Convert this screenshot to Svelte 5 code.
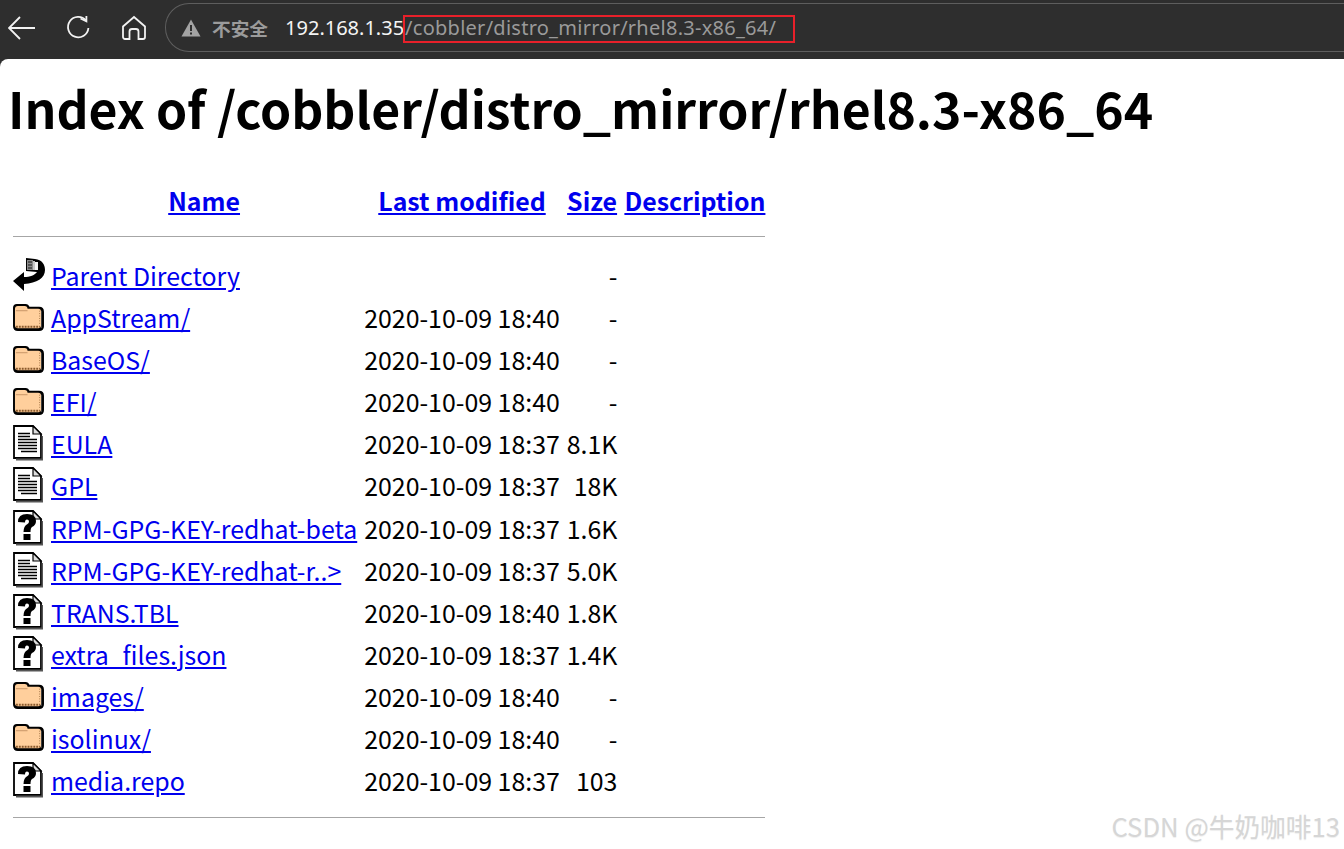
<script>
  const rows = [
    { icon: "back", name: "Parent Directory", date: "", size: "-" },
    { icon: "folder", name: "AppStream/", date: "2020-10-09 18:40", size: "-" },
    { icon: "folder", name: "BaseOS/", date: "2020-10-09 18:40", size: "-" },
    { icon: "folder", name: "EFI/", date: "2020-10-09 18:40", size: "-" },
    { icon: "text", name: "EULA", date: "2020-10-09 18:37", size: "8.1K" },
    { icon: "text", name: "GPL", date: "2020-10-09 18:37", size: "18K" },
    { icon: "unknown", name: "RPM-GPG-KEY-redhat-beta", date: "2020-10-09 18:37", size: "1.6K" },
    { icon: "text", name: "RPM-GPG-KEY-redhat-r..>", date: "2020-10-09 18:37", size: "5.0K" },
    { icon: "unknown", name: "TRANS.TBL", date: "2020-10-09 18:40", size: "1.8K" },
    { icon: "unknown", name: "extra_files.json", date: "2020-10-09 18:37", size: "1.4K" },
    { icon: "folder", name: "images/", date: "2020-10-09 18:40", size: "-" },
    { icon: "folder", name: "isolinux/", date: "2020-10-09 18:40", size: "-" },
    { icon: "unknown", name: "media.repo", date: "2020-10-09 18:37", size: "103" },
  ];
</script>

<div class="toolbar">
  <svg class="tool back" width="28" height="28" viewBox="0 0 28 28">
    <path d="M1 14H27M12 3L1 14L12 25" />
  </svg>
  <svg class="tool reload" width="26" height="26" viewBox="0 0 26 26">
    <path d="M21 5.500A10.200 10.200 0 1 0 23.400 13" />
    <path d="M15.500 3.500L21.400 6.400L21.400 1" />
  </svg>
  <svg class="tool home" width="26" height="26" viewBox="0 0 26 26">
    <path d="M2 11.500L13 2L24 11.500V22A2 2 0 0 1 22 24H17.500V16.500A2.500 2.500 0 0 0 15 14H11A2.500 2.500 0 0 0 8.500 16.500V24H4A2 2 0 0 1 2 22Z" />
  </svg>
  <div class="omnibox">
    <svg class="warn" width="20" height="18" viewBox="0 0 20 18">
      <path d="M10 0.500L19.500 17.500H0.500Z" fill="#a3a3a3" />
      <path d="M9 6H11V12H9ZM9 13.500H11V15.500H9Z" fill="#2e2e2e" />
    </svg>
    <span class="unsafe">不安全</span>
    <span class="host">192.168.1.35</span><span class="path">/cobbler/distro_mirror/rhel8.3-x86_64/</span>
    <span class="redbox"></span>
  </div>
</div>

<main class="page">
  <h1>Index of /cobbler/distro_mirror/rhel8.3-x86_64</h1>
  <table>
    <thead>
      <tr>
        <th class="ico"></th>
        <th><a href="#name">Name</a></th>
        <th><a href="#modified">Last modified</a></th>
        <th><a href="#size">Size</a></th>
        <th><a href="#description">Description</a></th>
      </tr>
      <tr><th colspan="5" class="rule"><hr /></th></tr>
    </thead>
    <tbody>
      {#each rows as row}
        <tr>
          <td class="ico">
            {#if row.icon === "back"}
              <svg width="32" height="34" viewBox="0 0 32 34">
                <path d="M13 0L22 1C29 2 32 6 32 12C32 20 24 25 11 26V33L0 23L11 14V19C17 19 22 17 24 14L13 13Z" fill="#000" />
                <path d="M14 2H20V12H14Z" fill="#8a8a8a" />
                <path d="M20 3H22V12H20Z" fill="#c4c4c4" />
                <path d="M22 4H25V12H22Z" fill="#f2f2f2" />
                <path d="M16 3V11M18 3V11" stroke="#1a1a1a" stroke-width="1" stroke-dasharray="2 1" />
              </svg>
            {:else if row.icon === "folder"}
              <svg width="31" height="29" viewBox="0 0 32 30">
                <path d="M0 5Q0 1 4 1H13Q16 1 17 4H27Q32 4 32 9V24Q32 29 27 29H5Q0 29 0 24Z" fill="#000" />
                <path d="M2 6Q2 3 5 3H12Q15 3 15 6H26Q29 6 29 9V23Q29 26 26 26H5Q2 26 2 23Z" fill="#ffcf9c" />
                <path d="M3 8H15" stroke="#c69463" stroke-width="1" />
                <path d="M3 24.500H28" stroke="#8a5a2c" stroke-width="2" stroke-dasharray="2 1" />
                <path d="M27.500 8V23" stroke="#a87a4c" stroke-width="1" stroke-dasharray="1 1.500" />
                <path d="M29.500 8V26" stroke="#444" stroke-width="1" />
              </svg>
            {:else}
              <svg width="30" height="36" viewBox="0 0 30 36">
                <path d="M1 1H20L28 9V33H1Z" fill="#fff" stroke="#000" stroke-width="1.800" />
                <path d="M3 34.500H29.500V11" fill="none" stroke="#555" stroke-width="1.800" />
                <path d="M20 1V9H28Z" fill="#ddd" stroke="#000" stroke-width="1.200" />
                {#if row.icon === "text"}
                  <path d="M5 8.500H17M5 11.500H17M5 14.500H24M5 17.500H24M5 20.500H24M5 23.500H24M8 26.500H24" stroke="#000" stroke-width="1.700" />
                {:else}
                  <path d="M5 12Q5 4 14 4Q23 4 23 11Q23 15 19 17Q17.500 18 17.500 22H10.500Q10.500 16 14.500 14Q16 13 16 11.500Q16 9.500 14 9.500Q12 9.500 12 12.500Z" fill="#000" />
                  <path d="M10.500 24H17.500V30H10.500Z" fill="#000" />
                {/if}
              </svg>
            {/if}
          </td>
          <td><a href="#{row.name}">{row.name}</a></td>
          <td>{row.date}</td>
          <td class="size">{row.size}</td>
          <td></td>
        </tr>
      {/each}
      <tr><th colspan="5" class="rule bottom"><hr /></th></tr>
    </tbody>
  </table>
</main>

<div class="watermark">CSDN @牛奶咖啡13</div>

<style>
  :global(body) {
    margin: 0;
    background: #2e2e2e;
    height: 849px;
    overflow: hidden;
    font-family: "Noto Sans CJK SC", "Noto Sans", sans-serif;
  }
  .toolbar {
    height: 59px;
    display: flex;
    align-items: flex-start;
    background: #2e2e2e;
    box-sizing: border-box;
    padding-left: 8px;
    font-family: "Noto Sans", "Noto Sans CJK SC", sans-serif;
  }
  .tool {
    flex: none;
    margin-top: 14px;
  }
  .tool path {
    fill: none;
    stroke: #f2f2f2;
    stroke-width: 1.8;
  }
  .reload {
    margin-left: 29px;
    margin-top: 15px;
  }
  .home {
    margin-left: 30px;
    margin-top: 15px;
  }
  .omnibox {
    position: relative;
    margin: 3px 0 0 18px;
    flex: 1;
    height: 49px;
    box-sizing: border-box;
    border: 1px solid #5e5e5e;
    border-right: none;
    border-radius: 24px 0 0 24px;
    display: flex;
    align-items: center;
    padding-left: 15px;
    font-size: 20px;
    white-space: nowrap;
  }
  .warn {
    flex: none;
  }
  .unsafe {
    margin-left: 11px;
    font-weight: 700;
    font-size: 18.700px;
    color: #9b9b9b;
    font-family: "Noto Sans CJK SC", sans-serif;
  }
  .host {
    margin-left: 17px;
    color: #f4f4f4;
  }
  .path {
    color: #9a9a9a;
    margin-left: 1px;
    letter-spacing: 0.26px;
  }
  .redbox {
    position: absolute;
    left: 237px;
    top: 11px;
    width: 392px;
    height: 28px;
    box-sizing: border-box;
    border: 2px solid #e8202a;
  }
  .page {
    background: #fff;
    height: 790px;
    border-radius: 8px 0 0 0;
    padding-top: 1px;
    box-sizing: border-box;
    color: #000;
  }
  h1 {
    margin: 12px 0 0 8px;
    font-size: 49.900px;
    line-height: 70px;
    font-weight: 700;
    white-space: nowrap;
  }
  table {
    margin: 37px 0 0 6px;
    border-collapse: separate;
    border-spacing: 7px 0;
    font-size: 24.900px;
    line-height: 36px;
  }
  a {
    color: #0000ee;
  }
  th {
    font-weight: 700;
    text-align: center;
    padding: 3px 0 0;
  }
  th.rule {
    padding: 0;
  }
  td {
    padding: 0;
    height: 42.080px;
    white-space: nowrap;
  }
  hr {
    margin: 18px 0 17px;
    border: none;
    height: 1px;
    background: #a6a6a6;
  }
  .bottom hr {
    margin: 16px 0 0;
  }
  .ico {
    width: 31px;
    padding: 0;
    line-height: 0;
    vertical-align: middle;
  }
  .ico svg {
    display: block;
    margin-right: -1px;
  }
  .size {
    text-align: right;
  }
  .watermark {
    position: absolute;
    right: 4px;
    bottom: 5px;
    font-size: 25.700px;
    line-height: 36px;
    color: #d6d6d6;
    text-shadow: 0 1px 1px #eee;
  }
</style>
